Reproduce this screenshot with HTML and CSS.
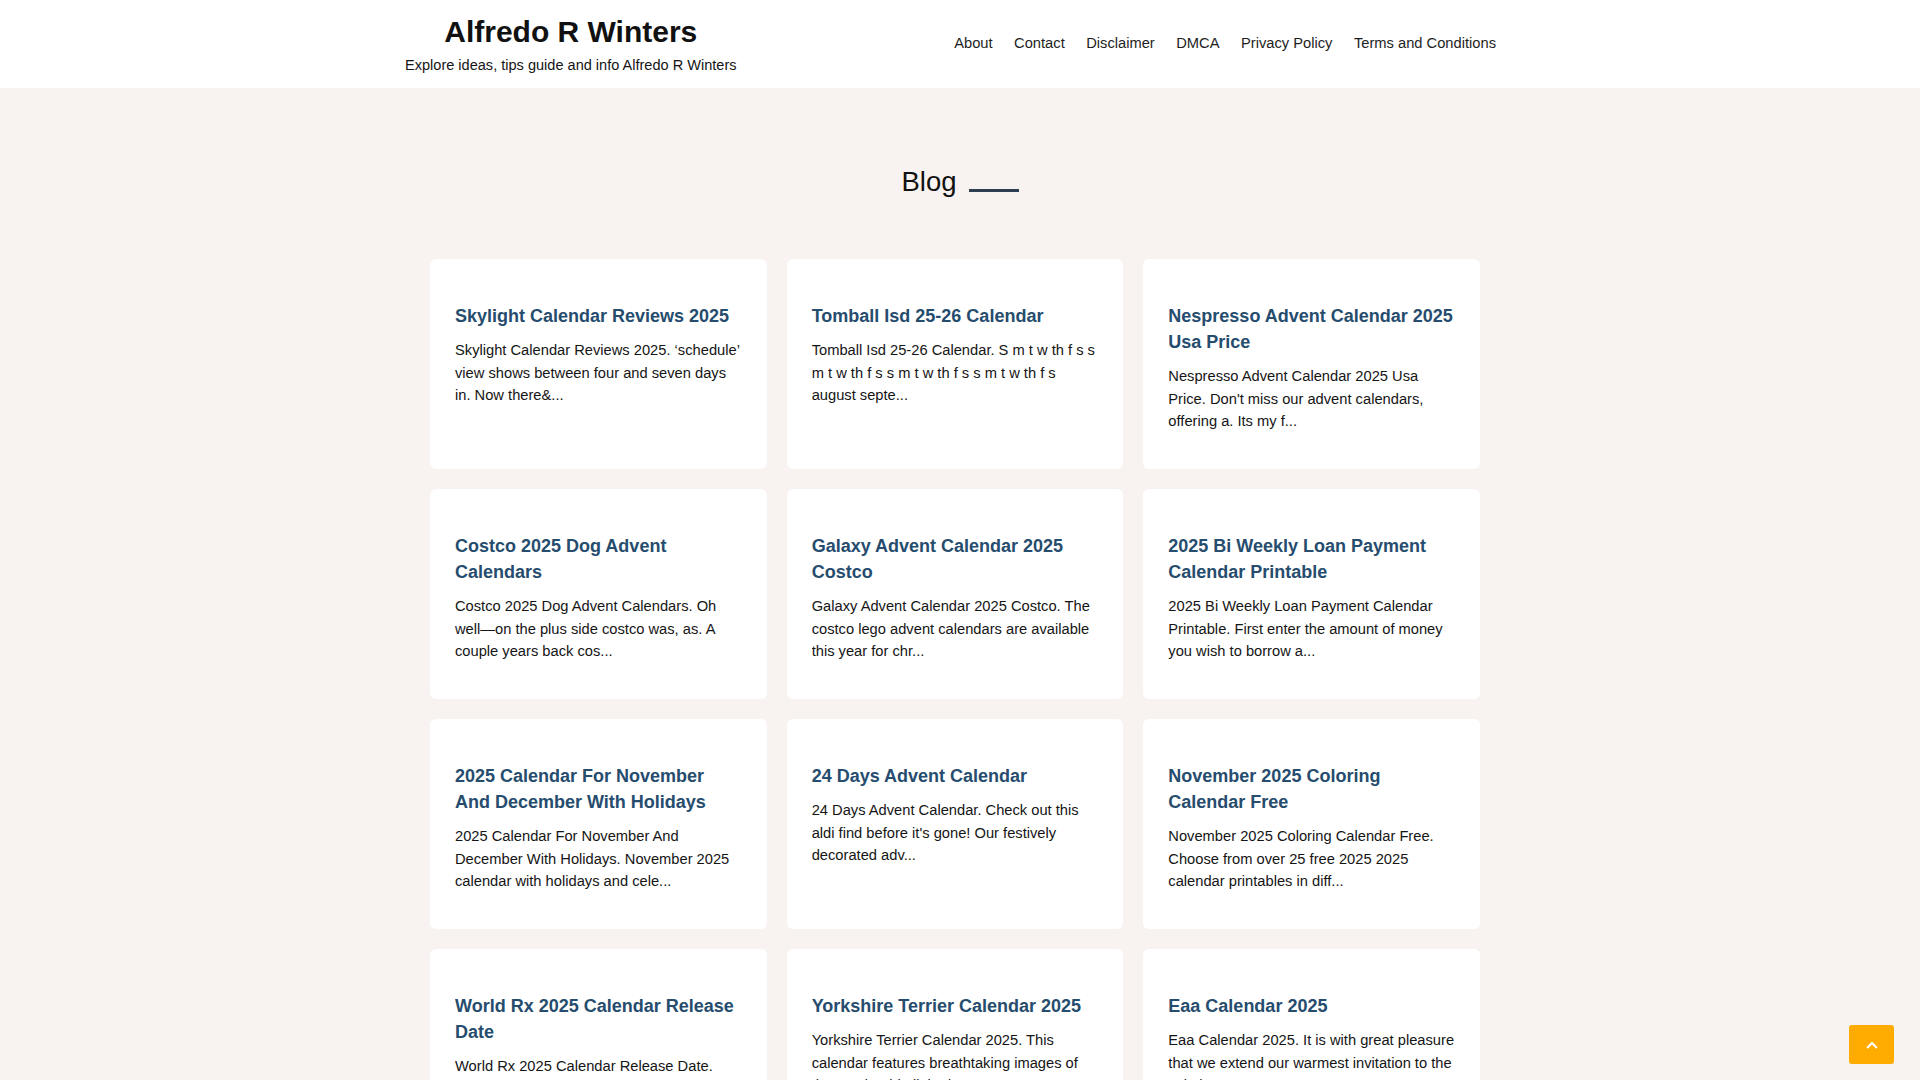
FILE: index.html
```html
<!DOCTYPE html>
<html lang="en">
<head>
<meta charset="utf-8">
<title>Alfredo R Winters</title>
<link rel="stylesheet" href="styles.css">
</head>
<body>
<header class="site-header">
  <div class="header-inner">
    <div class="brand">
      <a class="brand-title" href="#">Alfredo R Winters</a>
      <p class="brand-tagline">Explore ideas, tips guide and info Alfredo R Winters</p>
    </div>
    <nav class="main-nav">
      <a href="#">About</a>
      <a href="#">Contact</a>
      <a href="#">Disclaimer</a>
      <a href="#">DMCA</a>
      <a href="#">Privacy Policy</a>
      <a href="#">Terms and Conditions</a>
    </nav>
  </div>
</header>

<main class="container">
  <h1 class="section-title">Blog<span class="title-rule"></span></h1>

  <div class="post-grid">
    <article class="post-card">
      <h2 class="post-title"><a href="#">Skylight Calendar Reviews 2025</a></h2>
      <p class="post-excerpt">Skylight Calendar Reviews 2025. ‘schedule’ view shows between four and seven days in. Now there&amp;...</p>
    </article>
    <article class="post-card">
      <h2 class="post-title"><a href="#">Tomball Isd 25-26 Calendar</a></h2>
      <p class="post-excerpt">Tomball Isd 25-26 Calendar. S m t w th f s s m t w th f s s m t w th f s s m t w th f s august septe...</p>
    </article>
    <article class="post-card">
      <h2 class="post-title"><a href="#">Nespresso Advent Calendar 2025 Usa Price</a></h2>
      <p class="post-excerpt">Nespresso Advent Calendar 2025 Usa Price. Don't miss our advent calendars, offering a. Its my f...</p>
    </article>

    <article class="post-card">
      <h2 class="post-title"><a href="#">Costco 2025 Dog Advent Calendars</a></h2>
      <p class="post-excerpt">Costco 2025 Dog Advent Calendars. Oh well—on the plus side costco was, as. A couple years back cos...</p>
    </article>
    <article class="post-card">
      <h2 class="post-title"><a href="#">Galaxy Advent Calendar 2025 Costco</a></h2>
      <p class="post-excerpt">Galaxy Advent Calendar 2025 Costco. The costco lego advent calendars are available this year for chr...</p>
    </article>
    <article class="post-card">
      <h2 class="post-title"><a href="#">2025 Bi Weekly Loan Payment Calendar Printable</a></h2>
      <p class="post-excerpt">2025 Bi Weekly Loan Payment Calendar Printable. First enter the amount of money you wish to borrow a...</p>
    </article>

    <article class="post-card">
      <h2 class="post-title"><a href="#">2025 Calendar For November And December With Holidays</a></h2>
      <p class="post-excerpt">2025 Calendar For November And December With Holidays. November 2025 calendar with holidays and cele...</p>
    </article>
    <article class="post-card">
      <h2 class="post-title"><a href="#">24 Days Advent Calendar</a></h2>
      <p class="post-excerpt">24 Days Advent Calendar. Check out this aldi find before it's gone! Our festively decorated adv...</p>
    </article>
    <article class="post-card">
      <h2 class="post-title"><a href="#">November 2025 Coloring Calendar Free</a></h2>
      <p class="post-excerpt">November 2025 Coloring Calendar Free. Choose from over 25 free 2025 2025 calendar printables in diff...</p>
    </article>

    <article class="post-card">
      <h2 class="post-title"><a href="#">World Rx 2025 Calendar Release Date</a></h2>
      <p class="post-excerpt">World Rx 2025 Calendar Release Date. Mark your calendars for the full schedule of the season...</p>
    </article>
    <article class="post-card">
      <h2 class="post-title"><a href="#">Yorkshire Terrier Calendar 2025</a></h2>
      <p class="post-excerpt">Yorkshire Terrier Calendar 2025. This calendar features breathtaking images of these adorable little dogs...</p>
    </article>
    <article class="post-card">
      <h2 class="post-title"><a href="#">Eaa Calendar 2025</a></h2>
      <p class="post-excerpt">Eaa Calendar 2025. It is with great pleasure that we extend our warmest invitation to the aviation comm...</p>
    </article>
  </div>
</main>

<a class="back-to-top" href="#" aria-label="Back to top">
  <svg width="14" height="10" viewBox="0 0 14 10" aria-hidden="true">
    <polyline points="2,8 7,3 12,8" fill="none" stroke="#ffffff" stroke-width="2"/>
  </svg>
</a>
</body>
</html>
```

FILE: styles.css
```css
html, body {
  margin: 0;
  padding: 0;
}

body {
  background: #f8f3f0;
  font-family: "Liberation Sans", Arial, sans-serif;
  color: #151515;
}

a {
  text-decoration: none;
  color: inherit;
}

/* Header */
.site-header {
  background: #ffffff;
  height: 88px;
}

.header-inner {
  width: 1110px;
  height: 88px;
  margin: 0 auto;
  padding-right: 19px;
  box-sizing: border-box;
  display: flex;
  align-items: center;
  justify-content: space-between;
}

.brand {
  display: flex;
  flex-direction: column;
  align-items: center;
  padding-top: 1px;
}

.brand-title {
  font-size: 30px;
  font-weight: 700;
  line-height: 36px;
  color: #111111;
}

.brand-tagline {
  margin: 5px 0 0;
  font-size: 14.55px;
  line-height: 20px;
  color: #151515;
}

.main-nav {
  display: flex;
  gap: 21.5px;
  font-size: 14.7px;
  line-height: 20px;
  color: #1e1e1e;
  padding-bottom: 3px;
}

/* Main */
.container {
  width: 1100px;
  margin: 0 auto;
  padding: 0 30px 40px 20px;
  box-sizing: border-box;
}

.section-title {
  margin: 77px 0 61px;
  text-align: center;
  font-size: 27.5px;
  line-height: 33px;
  font-weight: 400;
  color: #111111;
  position: relative;
  left: 5px;
}

.title-rule {
  display: inline-block;
  width: 50px;
  height: 3px;
  margin-left: 12px;
  background: #2c3e50;
  vertical-align: -1px;
}

.post-grid {
  display: grid;
  grid-template-columns: repeat(3, 1fr);
  gap: 20px;
}

.post-card {
  background: #ffffff;
  border-radius: 6px;
  padding: 44px 24px 36px 25px;
  min-height: 210px;
  box-sizing: border-box;
}

.post-title {
  margin: 0 0 10px;
  font-size: 18px;
  line-height: 26px;
  font-weight: 700;
  color: #264c6e;
}

.post-excerpt {
  margin: 0;
  font-size: 14.7px;
  line-height: 22.5px;
  color: #151515;
  overflow: hidden;
  max-height: 67.5px;
}

/* Back to top */
.back-to-top {
  position: fixed;
  right: 26px;
  bottom: 16px;
  width: 45px;
  height: 39px;
  background: #ffab00;
  border-radius: 3px;
  display: flex;
  align-items: center;
  justify-content: center;
}
```
